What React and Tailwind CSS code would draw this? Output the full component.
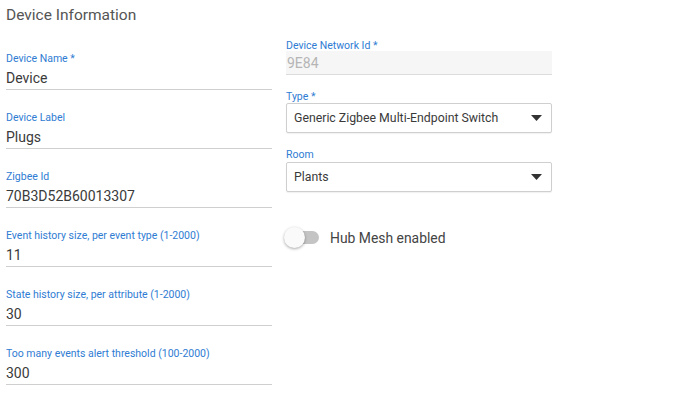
import React from 'react';

const TextField = ({ label, value }) => (
  <div className="mb-[21px]">
    <div className="text-[10.5px] leading-[14px] text-[#2f7cd3]">{label}</div>
    <div className="mt-[2px] h-[20px] text-[14px] leading-[20px] text-[#3a3a3a] border-b border-[#cfcfcf] box-content pb-[1px]">
      {value}
    </div>
  </div>
);

const SelectField = ({ label, value, className, boxClass }) => (
  <div className={className}>
    <div className="text-[10.5px] leading-[13px] text-[#2f7cd3]">{label}</div>
    <div className={`${boxClass} h-[30px] flex items-center justify-between pl-[7px] pr-[9px] border border-[#cfcfcf] rounded-[2px] shadow-[0_1px_1px_rgba(0,0,0,0.06)] bg-white`}>
      <span className="text-[12.3px] text-[#3a3a3a]">{value}</span>
      <svg width="11" height="6" viewBox="0 0 11 6">
        <path d="M0 0 L11 0 L5.5 6 Z" fill="#333" />
      </svg>
    </div>
  </div>
);

export default function App() {
  return (
    <div className="w-[690px] h-[402px] bg-white overflow-hidden" style={{ fontFamily: 'Roboto, "Liberation Sans", sans-serif' }}>
      <div className="pl-[6px] pt-[3px] h-[24px] text-[15.5px] leading-[24px] text-[#555]">Device Information</div>
      <div className="flex">
        <div className="w-[266px] ml-[6px] mt-[28px]">
          <TextField label="Device Name *" value="Device" />
          <TextField label="Device Label" value="Plugs" />
          <TextField label="Zigbee Id" value="70B3D52B60013307" />
          <TextField label="Event history size, per event type (1-2000)" value="11" />
          <TextField label="State history size, per attribute (1-2000)" value="30" />
          <TextField label="Too many events alert threshold (100-2000)" value="300" />
        </div>
        <div className="w-[266px] ml-[14px] mt-[16px]">
          <div>
            <div className="text-[10.5px] leading-[11px] text-[#2f7cd3]">Device Network Id *</div>
            <div className="h-[24px] bg-[#f6f6f6] border-b border-[#dcdcdc] pl-[1px] text-[14px] leading-[24px] text-[#b5b5b5]">9E84</div>
          </div>
          <SelectField className="mt-[15px]" boxClass="mt-0" label="Type *" value="Generic Zigbee Multi-Endpoint Switch" />
          <SelectField className="mt-[15px]" boxClass="mt-[1px]" label="Room" value="Plants" />
          <div className="mt-[34px] h-[24px] flex items-center">
            <div className="relative w-[34px] h-[14px] ml-[-1px]">
              <div className="absolute left-[3px] top-0 w-[31px] h-[13px] rounded-full bg-[#c4c4c4]" />
              <div className="absolute left-[-1px] top-[-4px] w-[21px] h-[21px] rounded-full bg-[#fafafa] shadow-[0_1px_3px_rgba(0,0,0,0.35)]" />
            </div>
            <span className="ml-[11px] text-[13.9px] text-[#444]">Hub Mesh enabled</span>
          </div>
        </div>
      </div>
    </div>
  );
}
